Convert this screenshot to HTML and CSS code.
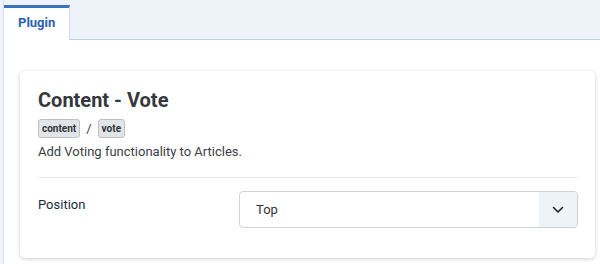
FILE: index.html
```html
<!DOCTYPE html>
<html>
<head>
<meta charset="utf-8">
<link rel="stylesheet" href="styles.css">
</head>
<body>
<div class="page">
  <div class="tabs">
    <div class="tab">Plugin</div>
  </div>
  <div class="content">
    <div class="card">
      <h2 class="title">Content - Vote</h2>
      <div class="badges">
        <span class="badge">content</span>
        <span class="sep">/</span>
        <span class="badge">vote</span>
      </div>
      <p class="desc">Add Voting functionality to Articles.</p>
      <hr class="rule">
      <div class="row">
        <label class="label">Position</label>
        <div class="select">
          <span class="value">Top</span>
          <span class="arrow">
            <svg width="12" height="8" viewBox="0 0 12 8"><path d="M1.5 1.5 L6 6 L10.5 1.5" fill="none" stroke="#1f2329" stroke-width="1.6" stroke-linecap="round" stroke-linejoin="round"/></svg>
          </span>
        </div>
      </div>
    </div>
  </div>
</div>
</body>
</html>
```

FILE: styles.css
```css
html, body {
  margin: 0;
  padding: 0;
  background: #eef2f9;
  font-family: Roboto, "Liberation Sans", sans-serif;
}
.page {
  margin-left: 3px;
  border-left: 1px solid #d9e0e8;
  background: #ffffff;
  height: 264px;
}
.tabs {
  display: flex;
  height: 40px;
  box-sizing: border-box;
  padding-top: 5px;
  background: #eef2f9;
  border-bottom: 1px solid #c5cfdb;
}
.tab {
  background: #ffffff;
  border-top: 3px solid #3d72ba;
  border-right: 1px solid #d3dae3;
  margin-bottom: -1px;
  padding: 6px 14px 0 14px;
  font-size: 13px;
  font-weight: 700;
  color: #2a62ad;
  line-height: 18px;
}
.content {
  padding: 31px 5px 0 16px;
}
.card {
  background: #ffffff;
  border-radius: 5px;
  box-shadow: 0 1px 4px rgba(0, 0, 0, 0.2);
  padding: 17px 17px 30px 18px;
}
.title {
  margin: 0;
  font-size: 20px;
  font-weight: 700;
  line-height: 24px;
  color: #35393e;
}
.badges {
  display: flex;
  align-items: center;
  gap: 6px;
  margin-top: 7px;
}
.badge {
  display: inline-block;
  font-size: 10px;
  font-weight: 700;
  color: #2f3438;
  background: #e2e5e8;
  border: 1px solid #bcc1c6;
  border-radius: 3px;
  padding: 0 3px;
  line-height: 17px;
}
.sep {
  font-size: 13px;
  color: #3b4045;
}
.desc {
  margin: 5px 0 0 0;
  font-size: 13px;
  line-height: 18px;
  color: #3b4045;
}
.rule {
  border: 0;
  border-top: 1px solid #e6e9ec;
  margin: 16px 0 13px 0;
}
.row {
  display: flex;
  align-items: flex-start;
}
.label {
  width: 201px;
  padding-top: 5px;
  font-size: 13px;
  line-height: 18px;
  color: #1c2b3c;
}
.select {
  flex: 1;
  display: flex;
  height: 37px;
  box-sizing: border-box;
  border: 1px solid #cdd2d7;
  border-radius: 4px;
  overflow: hidden;
}
.value {
  flex: 1;
  display: flex;
  align-items: center;
  padding-left: 16px;
  font-size: 13px;
  color: #2f3438;
}
.arrow {
  width: 38px;
  display: flex;
  align-items: center;
  justify-content: center;
  background: #eef2f9;
}
```
